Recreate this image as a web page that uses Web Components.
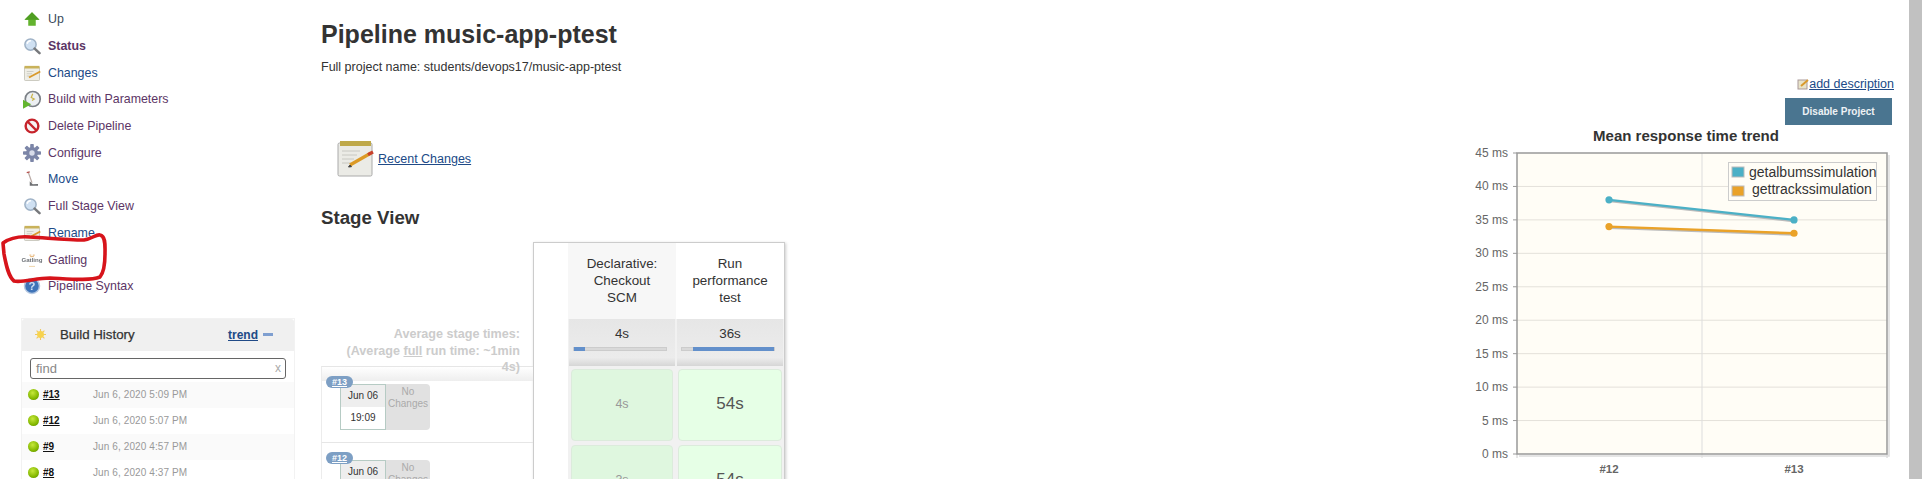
<!doctype html>
<html>
<head>
<meta charset="utf-8">
<title>Pipeline music-app-ptest</title>
<style>
  html, body { margin: 0; height: 100%; overflow: hidden; background: #fff; }
  body { font: 12.5px "Liberation Sans", Arial, sans-serif; color: #333; }
</style>
</head>
<body>
<jenkins-page></jenkins-page>

<script>
// icons used in the side menu, all 24x24
const ICONS = {
  up: `<path d="M12 3 L22 13 H17 V21 H7 V13 H2 Z" fill="#63b32e"/><path d="M12 3 L22 13 H2 Z" fill="#4f9e22"/>`,
  search: `<circle cx="10" cy="10" r="7.5" fill="#cfe0f2" stroke="#9fb2c6" stroke-width="2"/><path d="M5.500 9a5 5 0 0 1 5-4" stroke="#fff" stroke-width="2" fill="none"/><path d="M15.500 15.500 L22 21.500" stroke="#77797c" stroke-width="3.400" stroke-linecap="round"/>`,
  notepad: `<rect x="2" y="4" width="20" height="18" rx="1" fill="#efeee6" stroke="#bdbcb0"/><rect x="2" y="2.500" width="20" height="3.500" fill="#c9b25a"/><path d="M5 10h9M5 13h7M5 16h5" stroke="#c4c4bc"/><path d="M8 18 L23 10" stroke="#d99a2c" stroke-width="2.600"/>`,
  build: `<circle cx="13" cy="12" r="10" fill="#eceff2" stroke="#7b8086" stroke-width="2.200"/><path d="M13 5 L11 10 L15 12 L12 14" stroke="#c9b34a" stroke-width="1.600" fill="none"/><path d="M0 13 L11 19 L0 25 Z" fill="#63b52f"/>`,
  delete: `<circle cx="12" cy="12" r="8.500" fill="#f7f3f3" stroke="#c6232b" stroke-width="3.200"/><path d="M6 6 L18 18" stroke="#c6232b" stroke-width="3.200"/>`,
  gear: `<g fill="#7c86a8"><circle cx="12" cy="12" r="8"/><rect x="9.600" y="0" width="4.800" height="24" rx="1"/><rect x="9.600" y="0" width="4.800" height="24" rx="1" transform="rotate(45 12 12)"/><rect x="9.600" y="0" width="4.800" height="24" rx="1" transform="rotate(90 12 12)"/><rect x="9.600" y="0" width="4.800" height="24" rx="1" transform="rotate(135 12 12)"/></g><circle cx="12" cy="12" r="3.600" fill="#d8dcea"/>`,
  move: `<path d="M7 3 L12 17" stroke="#b9a9a4" stroke-width="1.600"/><path d="M5 3.500 L9 2.500" stroke="#b5514c" stroke-width="1.600"/><path d="M9 15 L13 19 L20 18.500 L20 21 L9 21 Z" fill="#6d6f72"/>`,
  help: `<circle cx="12" cy="12" r="10" fill="#3f74b8" stroke="#b6c9e2" stroke-width="2"/><text x="12" y="17.500" text-anchor="middle" font-family="Liberation Sans" font-weight="700" font-size="15" fill="#cfe0f4">?</text>`,
  gatling: `<path d="M8.500 5.500h2.600M13 5.500h2.600M9.500 7.500h5" stroke="#e2a860" stroke-width="1.200"/><text x="12" y="15" text-anchor="middle" font-family="Liberation Sans" font-weight="700" font-size="8.200" fill="#6f7378">Gatling</text><path d="M8 20.500h8" stroke="#e8c48c"/>`
};

// one row of the side menu
class TaskLink extends HTMLElement {
  connectedCallback() {
    const icon = this.getAttribute("icon");
    const root = this.attachShadow({ mode: "open" });
    root.innerHTML = `
      <style>
        :host { display: flex; align-items: center; height: 26.7px; padding-left: 23px; gap: 7px;
                color: var(--link, #5c3566); font-size: 12.4px; white-space: nowrap; }
        :host([current]) { font-weight: 700; }
        svg { width: 18px; height: 18px; flex: none; overflow: visible; filter: blur(.3px); }
      </style>
      <svg viewBox="0 0 24 24">${ICONS[icon]}</svg><slot></slot>`;
  }
}
customElements.define("task-link", TaskLink);

class HistoryRow extends HTMLElement {
  connectedCallback() {
    const root = this.attachShadow({ mode: "open" });
    root.innerHTML = `
      <style>
        :host { display: flex; align-items: center; height: 26px; padding-left: 6px; font-size: 10px; }
        :host(:nth-child(odd)) { background: #fafafa; }
        .ball { width: 11px; height: 11px; border-radius: 50%; flex: none;
                background: radial-gradient(circle at 42% 35%, #c6e83c, #84b800 60%, #4f8000); }
        a { width: 50px; margin-left: 4px; font-weight: 700; color: #111; text-decoration: underline; }
        span { color: #999; letter-spacing: .1px; }
      </style>
      <div class="ball"></div><a>${this.getAttribute("num")}</a><span>${this.getAttribute("date")}</span>`;
  }
}
customElements.define("history-row", HistoryRow);

class BuildHistory extends HTMLElement {
  constructor() {
    super();
    this.attachShadow({ mode: "open" }).innerHTML = `
      <style>
        :host { display: block; width: 274px; margin: 18px 0 0 21px; border: 1px solid #f2f2f2; border-bottom: 0; box-sizing: border-box; }
        .head { display: flex; align-items: center; height: 32px; background: #f0f0f0; border-radius: 3px 3px 0 0; padding: 0 21px 0 13px; }
        .head b { font-size: 13.3px; font-weight: 400; -webkit-text-stroke: .25px #333; color: #333; margin-left: 14px; flex: 1; }
        .head a { font-size: 12px; font-weight: 700; color: #204a87; text-decoration: underline; }
        .dash { width: 10px; height: 3px; background: #7f9fd0; margin-left: 5px; }
        .find { display: flex; align-items: center; justify-content: space-between; box-sizing: border-box;
                margin: 7px 8px 3px; height: 21px; border: 1px solid #666; border-radius: 3px; padding: 0 4px 0 5px; font-size: 13px; color: #888; }
        .find span:last-child { color: #aaa; font-size: 12px; }
        svg { width: 11px; height: 11px; filter: blur(.3px); }
      </style>
      <div class="head">
        <svg viewBox="0 0 14 14"><g stroke="#f0c860" stroke-width="1.400"><path d="M7 0v14M0 7h14M2 2l10 10M12 2L2 12"/></g><circle cx="7" cy="7" r="4.400" fill="#f7d34e"/></svg>
        <b>Build History</b><a>trend</a><div class="dash"></div>
      </div>
      <div class="find"><span>find</span><span>x</span></div>
      <slot></slot>`;
  }
}
customElements.define("build-history", BuildHistory);

// left hand build card of the stage view
class BuildCard extends HTMLElement {
  connectedCallback() {
    const root = this.attachShadow({ mode: "open" });
    root.innerHTML = `
      <style>
        :host { display: block; position: relative; height: 76px; box-sizing: border-box; border-top: 1px solid #e6e6e6; border-left: 1px solid #ececec; padding: 17px 0 0 18px;
                background: linear-gradient(#fff, #eee) no-repeat 0 0 / 100% 14px; }
        :host(:last-child) { background: none; }
        .badge { position: absolute; left: 4px; top: 9px; width: 27px; height: 12px; border-radius: 7px; background: #7d9fc4;
                 color: #fff; font-size: 9px; font-weight: 700; line-height: 12px; text-align: center; text-decoration: underline; z-index: 1; }
        .box { display: flex; width: 90px; height: 46px; background: #fff; }
        .date { width: 46px; box-sizing: border-box; border: 1px solid #b6cbc4; font-size: 10px; color: #333; text-align: center; }
        .date div { height: 22px; line-height: 22px; }
        .date div:first-child { background: #eee; }
        .nc { width: 44px; background: #e1e1e1; border-radius: 0 4px 4px 0; color: #aaa; font-size: 10px; line-height: 12px; text-align: center; padding-top: 2px; box-sizing: border-box; }
      </style>
      <div class="badge">${this.getAttribute("num")}</div>
      <div class="box">
        <div class="date"><div>Jun 06</div><div>19:09</div></div>
        <div class="nc">No Changes</div>
      </div>`;
  }
}
customElements.define("build-card", BuildCard);

class StageColumn extends HTMLElement {
  connectedCallback() {
    const shaded = this.hasAttribute("shaded");
    const pct = this.getAttribute("bar").split(",");
    const cells = this.getAttribute("cells").split(",");
    const root = this.attachShadow({ mode: "open" });
    root.innerHTML = `
      <style>
        :host { display: block; width: 108px; font-size: 13.4px; }
        .name { height: 76px; box-sizing: border-box; padding-top: 12px; line-height: 17px; text-align: center; color: #333; background: ${shaded ? "#f7f7f7" : "#fff"}; }
        .avg { height: 47px; box-sizing: border-box; margin: 0 1px; padding-top: 7px; text-align: center; line-height: 15px; background: linear-gradient(#e6e6e6, #ececec 82%, #d6d6d6); }
        .track { position: relative; height: 4px; margin: 6px 8px 0 4px; background: #d9d9d9; border: 1px solid #ccc; box-sizing: border-box; }
        .fill { position: absolute; top: -1px; bottom: -1px; background: #6390cb; left: ${pct[0]}%; width: ${pct[1]}%; }
        .cell { height: 72px; box-sizing: border-box; margin: 3px ${shaded ? 3 : 2}px 4px; padding-bottom: 2px; border: 1px solid #dcebdc; border-radius: 4px;
                background: ${shaded ? "#dff7df" : "#e6ffe6"}; display: flex; align-items: center; justify-content: center;
                color: ${shaded ? "#999" : "#555"}; font-size: ${shaded ? 12.5 : 17}px; }
      </style>
      <div class="name"><slot></slot></div>
      <div class="avg">${this.getAttribute("avg")}<div class="track"><div class="fill"></div></div></div>
      ${cells.map(c => `<div class="cell">${c}</div>`).join("")}`;
  }
}
customElements.define("stage-column", StageColumn);

class StageView extends HTMLElement {
  constructor() {
    super();
    this.attachShadow({ mode: "open" }).innerHTML = `
      <style>
        :host { display: flex; align-items: flex-start; margin-top: 13px; }
        .left { width: 212px; padding-top: 124px; position: relative; }
        .avg { position: absolute; top: 84px; right: 13px; width: 175px; text-align: right; color: #ccc; font-size: 12.6px; font-weight: 700; line-height: 16.500px; z-index: 1; }
        .avg u { text-decoration: underline; }
        .table { display: flex; height: 400px; box-sizing: border-box; border: 1px solid #ccc; border-bottom: 0; box-shadow: 1px 1px 3px #ccc; padding-left: 34px; background: #fff; }
        .stages { display: flex; background: #f1f1f1; }
      </style>
      <div class="left">
        <div class="avg">Average stage times:<br>(Average <u>full</u> run time: ~1min 4s)</div>
        <build-card num="#13"></build-card>
        <build-card num="#12"></build-card>
      </div>
      <div class="table"><div class="stages">
        <stage-column shaded avg="4s" bar="0,12" cells="4s,3s">Declarative:<br>Checkout<br>SCM</stage-column>
        <stage-column avg="36s" bar="12,88" cells="54s,54s">Run<br>performance<br>test</stage-column>
      </div></div>`;
  }
}
customElements.define("stage-view", StageView);

// Mean response time chart, drawn from its series
class TrendChart extends HTMLElement {
  constructor() {
    super();
    const L = 67, R = 437, T = 32, B = 333, W = R - L, H = B - T;
    const y = v => B - v / 45 * H;
    const xs = [159, 344];
    const series = [
      { color: "#4bb0c6", vals: [38, 35] },
      { color: "#eaa228", vals: [34, 33] }
    ];
    let grid = "", labels = "";
    for (let v = 0; v <= 45; v += 5) {
      const yy = y(v);
      if (v > 0 && v < 45) grid += `<path d="M${L} ${yy}H${R}" stroke="#e4e1da" stroke-width="1"/>`;
      grid += `<path d="M${L - 4} ${yy}H${L}" stroke="#999"/>`;
      labels += `<text x="${L - 9}" y="${yy + 4}" text-anchor="end" class="tick">${v} ms</text>`;
    }
    const lines = series.map(s => {
      const pts = s.vals.map((v, i) => `${xs[i]},${y(v)}`).join(" ");
      return `<polyline points="${pts}" fill="none" stroke="#bbb" stroke-width="2" transform="translate(1,1.500)"/>
        <polyline points="${pts}" fill="none" stroke="${s.color}" stroke-width="2.400"/>
        ${s.vals.map((v, i) => `<circle cx="${xs[i]}" cy="${y(v)}" r="3.600" fill="${s.color}"/>`).join("")}`;
    }).join("");
    this.attachShadow({ mode: "open" }).innerHTML = `
      <style>
        :host { display: block; flex: none; width: 445px; height: 360px; margin: -4px -3px 0 0; }
        svg { display: block; font-family: "Liberation Sans", Arial, sans-serif; }
        .tick { font-size: 12px; fill: #666; }
        .x { font-size: 11.500px; font-weight: 700; }
        .title { font-size: 15px; font-weight: 700; fill: #333; }
        .leg { font-size: 14px; fill: #333; }
      </style>
      <svg width="445" height="360" viewBox="0 0 445 360">
        <text x="236" y="20" text-anchor="middle" class="title">Mean response time trend</text>
        <rect x="${L}" y="${T}" width="${W}" height="${H}" fill="#fffdf6"/>
        ${grid}
        <path d="M252 ${T}V${B + 4}" stroke="#ddd"/>
        <path d="M${L} ${B}v4M${R} ${B}v4" stroke="#ccc"/>
        <rect x="${L}" y="${T}" width="${W}" height="${H}" fill="none" stroke="#999" stroke-width="1.500"/>
        <path d="M${R + 2} ${T + 2}V${B + 2}H${L + 2}" fill="none" stroke="#ddd" stroke-width="1.500"/>
        ${labels}
        <text x="159" y="352" text-anchor="middle" class="tick x">#12</text>
        <text x="344" y="352" text-anchor="middle" class="tick x">#13</text>
        ${lines}
        <rect x="278.500" y="41.500" width="148" height="38" fill="#fffdf6" stroke="#ccc"/>
        <rect x="282" y="46" width="12" height="10" fill="#4bb0c6" stroke="#bbb"/>
        <rect x="282" y="65" width="12" height="10" fill="#eaa228" stroke="#bbb"/>
        <text x="299" y="56" class="leg">getalbumssimulation</text>
        <text x="302" y="73" class="leg">gettrackssimulation</text>
      </svg>`;
  }
}
customElements.define("trend-chart", TrendChart);

class JenkinsPage extends HTMLElement {
  constructor() {
    super();
    this.attachShadow({ mode: "open" }).innerHTML = `
      <style>
        :host { display: flex; position: relative; width: 1922px; height: 479px; overflow: hidden; }
        .side { width: 321px; flex: none; padding-top: 6px; box-sizing: border-box; }
        task-link.blue { --link: #204a87; }
        task-link.up { --link: #3b4a5c; }
        .main { flex: 1; min-width: 0; box-sizing: border-box; padding-top: 20px; }
        h1 { margin: 0; font-size: 25px; line-height: 28px; color: #333; }
        .full { margin: 12px 0 0; line-height: 14px; }
        .recent { display: flex; align-items: center; gap: 4px; margin: 66px 0 0 16px; height: 38px; }
        .recent a { color: #204a87; text-decoration: underline; }
        h2 { margin: 29px 0 0; font-size: 18.700px; line-height: 22px; color: #333; }
        .right { width: 377px; flex: none; display: flex; flex-direction: column; align-items: flex-end; padding-top: 76px; box-sizing: border-box; }
        .add { flex: none; display: flex; align-items: center; gap: 0; margin-right: -2px; height: 15px; color: #204a87; text-decoration: underline; }
        .btn { flex: none; margin-top: 7px; width: 107px; height: 27px; background: #4a7590; color: #eef2f5; font-size: 10px; font-weight: 700; display: flex; align-items: center; justify-content: center; }
        .scroll { width: 13px; flex: none; margin-left: 17px; background: #c1c1c1; }
        .scribble { position: absolute; left: 0; top: 228px; pointer-events: none; }
      </style>
      <nav class="side">
        <task-link class="up" icon="up">Up</task-link>
        <task-link icon="search" current>Status</task-link>
        <task-link class="blue" icon="notepad">Changes</task-link>
        <task-link icon="build">Build with Parameters</task-link>
        <task-link icon="delete">Delete Pipeline</task-link>
        <task-link icon="gear">Configure</task-link>
        <task-link class="blue" icon="move">Move</task-link>
        <task-link icon="search">Full Stage View</task-link>
        <task-link class="blue" icon="notepad">Rename</task-link>
        <task-link icon="gatling">Gatling</task-link>
        <task-link icon="help">Pipeline Syntax</task-link>
        <build-history>
          <history-row num="#13" date="Jun 6, 2020 5:09 PM"></history-row>
          <history-row num="#12" date="Jun 6, 2020 5:07 PM"></history-row>
          <history-row num="#9" date="Jun 6, 2020 4:57 PM"></history-row>
          <history-row num="#8" date="Jun 6, 2020 4:37 PM"></history-row>
        </build-history>
      </nav>
      <main class="main">
        <h1>Pipeline music-app-ptest</h1>
        <p class="full">Full project name: students/devops17/music-app-ptest</p>
        <div class="recent">
          <svg width="37" height="38" viewBox="0 0 37 38">
            <rect x="1" y="3" width="34" height="33" rx="1.500" fill="#ebebe6" stroke="#aaa"/>
            <rect x="3" y="1" width="31" height="5" fill="#bfa94a"/>
            <path d="M5 11h18M5 15h15M5 19h12M5 23h9" stroke="#c8c8c2"/>
            <path d="M13 25 L34 13" stroke="#dc9a26" stroke-width="3.200"/>
            <path d="M31 14.700 L36 12" stroke="#c8402c" stroke-width="3.200"/>
            <path d="M13 25l-1.500 2 3-.3z" fill="#444" stroke="#444"/>
          </svg>
          <a>Recent Changes</a>
        </div>
        <h2>Stage View</h2>
        <stage-view></stage-view>
      </main>
      <aside class="right">
        <div class="add">
          <svg width="12" height="12" viewBox="0 0 12 12"><rect x="1" y="2" width="9" height="9" fill="#e8e3c8" stroke="#a99"/><path d="M4 8 L11 2" stroke="#d99a2c" stroke-width="2"/></svg>
          add description
        </div>
        <div class="btn">Disable Project</div>
        <trend-chart></trend-chart>
      </aside>
      <div class="scroll"></div>
      <svg class="scribble" width="112" height="60" viewBox="0 228 112 60">
        <path d="M3 243 C10 238 18 236 30 237 C48 238 66 240 84 240 C92 239 96 234 100 235 C106 236 105 246 105 254 C105 264 104 272 100 277 C90 281 70 279 50 278 C36 278 22 283 14 281 C8 276 6 264 4 254 Z" fill="none" stroke="#d7141b" stroke-width="3.600" stroke-linejoin="round"/>
      </svg>`;
  }
}
customElements.define("jenkins-page", JenkinsPage);
</script>
</body>
</html>
